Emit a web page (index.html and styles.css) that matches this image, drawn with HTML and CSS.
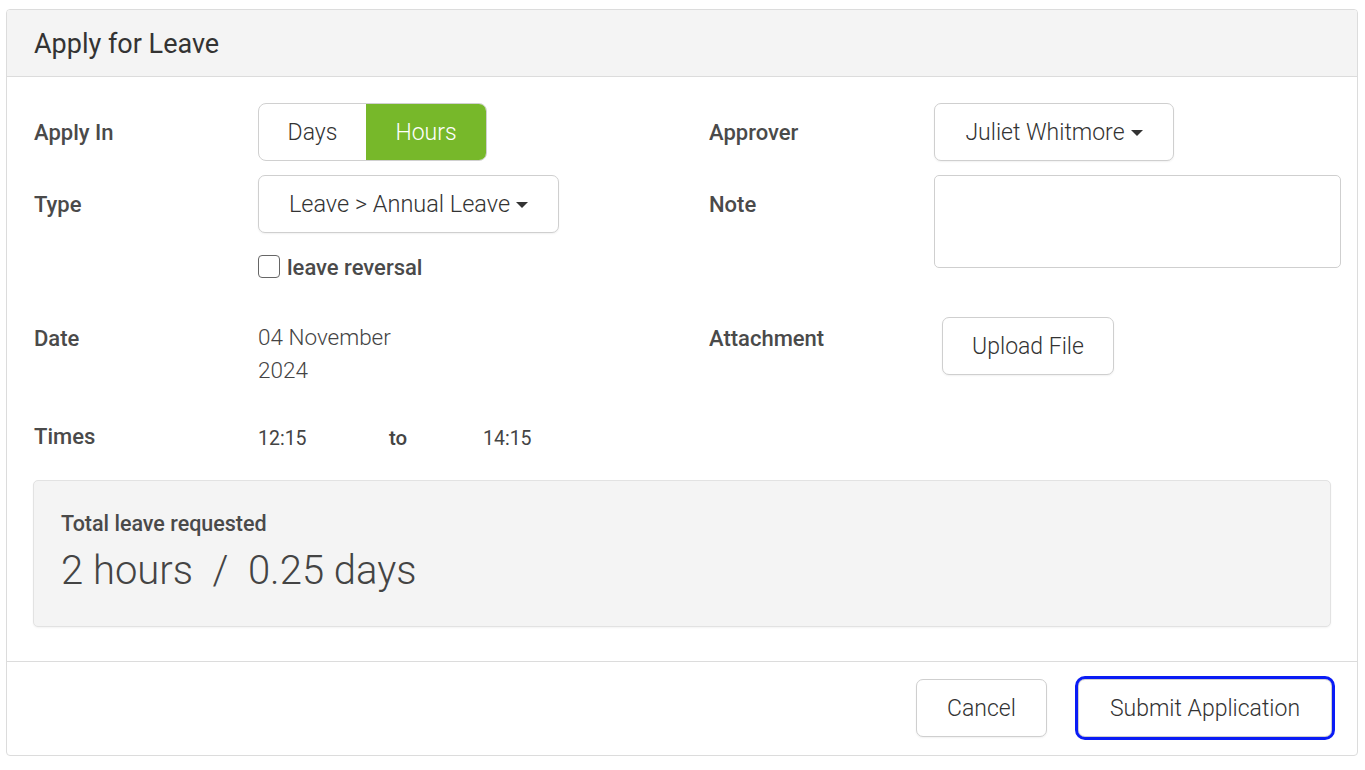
FILE: index.html
```html
<!DOCTYPE html>
<html lang="en">
<head>
<meta charset="utf-8">
<title>Apply for Leave</title>
<link rel="stylesheet" href="styles.css">
</head>
<body>
<div class="panel">
  <div class="panel-head">Apply for Leave</div>
  <div class="panel-body">
    <div class="form-grid">
      <div class="label r1">Apply In</div>
      <div class="field r1">
        <div class="toggle">
          <span class="seg">Days</span>
          <span class="seg active">Hours</span>
        </div>
      </div>
      <div class="label r1">Approver</div>
      <div class="field r1">
        <button class="btn btn-drop approver">Juliet Whitmore<span class="caret"></span></button>
      </div>

      <div class="label r2">Type</div>
      <div class="field r2">
        <button class="btn btn-drop type">Leave &gt; Annual Leave<span class="caret"></span></button>
        <label class="check"><span class="box"></span>leave reversal</label>
      </div>
      <div class="label r2">Note</div>
      <div class="field r2">
        <div class="note"></div>
      </div>

      <div class="label r3">Date</div>
      <div class="field r3"><div class="date">04 November<br>2024</div></div>
      <div class="label r3">Attachment</div>
      <div class="field r3"><button class="btn upload">Upload File</button></div>

      <div class="label r4">Times</div>
      <div class="field r4">
        <div class="times"><span class="t-from">12:15</span><span class="t-to">to</span><span class="t-end">14:15</span></div>
      </div>
      <div class="label r4"></div>
      <div class="field r4"></div>
    </div>

    <div class="summary">
      <div class="summary-title">Total leave requested</div>
      <div class="summary-value">2 hours&nbsp; /&nbsp; 0.25 days</div>
    </div>
  </div>
  <div class="panel-foot">
    <button class="btn cancel">Cancel</button>
    <button class="btn submit">Submit Application</button>
  </div>
</div>
</body>
</html>
```

FILE: styles.css
```css
* { box-sizing: border-box; }
html, body { margin: 0; padding: 0; background: #fff; }
body {
  font-family: Roboto, "Open Sans", Arial, sans-serif;
  color: #333;
  padding: 9px 7px 0 6px;
}
.panel {
  width: 1352px;
  height: 747px;
  border: 1px solid #dcdcdc;
  border-radius: 4px;
  display: flex;
  flex-direction: column;
  overflow: hidden;
}
.panel-head {
  height: 67px;
  background: #f4f4f4;
  border-bottom: 1px solid #dcdcdc;
  padding: 0 0 0 27px;
  font-size: 27px;
  line-height: 68px;
  color: #333;
  font-weight: 400;
}
.panel-body {
  flex: 1;
  padding: 26px 0 0 27px;
  border-bottom: 1px solid #dcdcdc;
}
.form-grid {
  display: grid;
  grid-template-columns: 224px 451px 225px 407px;
  align-items: start;
}
.label {
  font-size: 22px;
  font-weight: 500;
  color: #4a4a4a;
  line-height: 26px;
}
.label.r1, .label.r2 { padding-top: 17px; }
.r2 { margin-top: 14px; }
.r3 { margin-top: 35px; }
.label.r3 { padding-top: 9px; }
.r4 { margin-top: 37px; }
.field { font-size: 22px; }

.toggle {
  display: inline-flex;
  height: 58px;
  border: 1px solid #d0d0d0;
  border-radius: 8px;
  overflow: hidden;
}
.seg {
  display: flex;
  align-items: center;
  justify-content: center;
  font-weight: 300;
  font-size: 23px;
  color: #333;
  width: 107px;
}
.seg.active {
  background: #77b82a;
  color: #fff;
  width: 120px;
}

.btn {
  font-family: inherit;
  font-size: 23px;
  font-weight: 300;
  color: #333;
  background: #fff;
  border: 1px solid #cfcfcf;
  border-radius: 7px;
  height: 58px;
  padding: 0;
  box-shadow: 0 1px 2px rgba(0,0,0,0.06);
  display: inline-flex;
  align-items: center;
  justify-content: center;
  cursor: pointer;
}
.btn-drop { gap: 6px; }
.caret {
  width: 0; height: 0;
  border-left: 6px solid transparent;
  border-right: 6px solid transparent;
  border-top: 6px solid #333;
  margin-top: 2px;
}
.approver { width: 240px; }
.type { width: 301px; font-size: 23.5px; }
.check {
  display: flex;
  align-items: center;
  gap: 7px;
  margin-top: 21px;
  font-size: 22px;
  font-weight: 500;
  color: #4a4a4a;
  line-height: 28px;
}
.box {
  width: 22px; height: 23px;
  border: 1.5px solid #666;
  border-radius: 4px;
  margin-top: -4px;
}
.note {
  width: 407px;
  height: 93px;
  border: 1px solid #cfcfcf;
  border-radius: 5px;
}
.date {
  font-size: 22.5px;
  font-weight: 300;
  line-height: 33px;
  color: #444;
  padding-top: 4px;
}
.upload { width: 172px; margin-left: 8px; }
.times {
  display: flex;
  align-items: baseline;
  font-size: 19.5px;
  line-height: 26px;
  color: #444;
  padding-top: 1px;
}
.t-from { width: 131px; }
.t-to { width: 94px; font-weight: 500; font-size: 20.5px; }

.summary {
  margin: 28px 0 0 -1px;
  width: 1298px;
  height: 147px;
  background: #f4f4f4;
  border: 1px solid #e2e2e2;
  border-radius: 5px;
  box-shadow: 0 1px 2px rgba(0,0,0,0.05);
  padding: 30px 0 0 27px;
}
.summary-title {
  font-size: 21.5px;
  font-weight: 500;
  color: #4a4a4a;
  line-height: 26px;
}
.summary-value {
  font-size: 40px;
  font-weight: 300;
  color: #444;
  line-height: 48px;
  margin-top: 10px;
}

.panel-foot {
  height: 93px;
  display: flex;
  justify-content: flex-end;
  align-items: flex-start;
  padding: 17px 25px 0 0;
  gap: 31px;
}
.cancel { width: 131px; }
.submit {
  width: 254px;
  outline: 3px solid #0a1cf5;
  outline-offset: 0;
}
```
